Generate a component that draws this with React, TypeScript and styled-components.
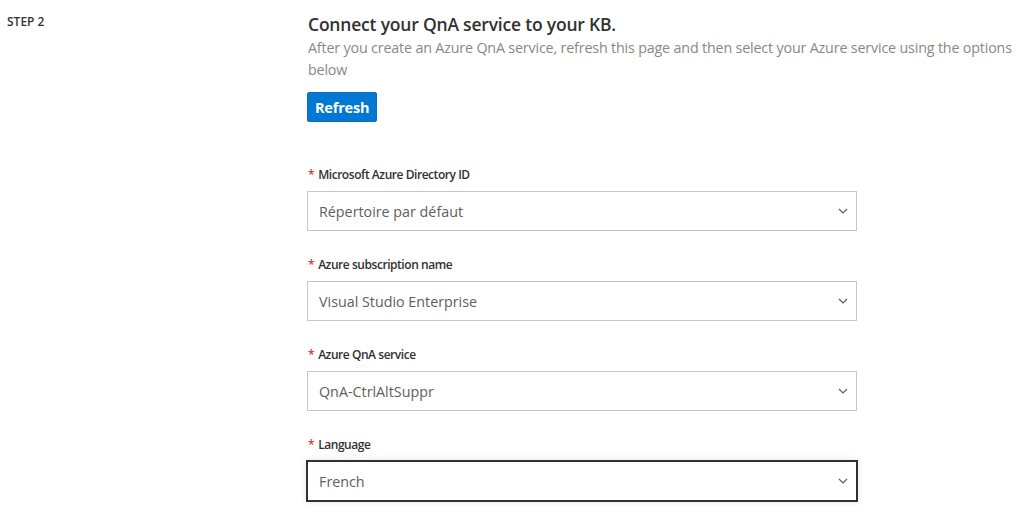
import React from "react";
import styled, { createGlobalStyle } from "styled-components";

const Global = createGlobalStyle`
  html, body { margin: 0; padding: 0; background: #fff; }
  body { font-family: "Segoe UI", "Open Sans", "Noto Sans", sans-serif; }
  * { box-sizing: border-box; }
`;

const Page = styled.div`
  display: grid;
  grid-template-columns: 300px 712px;
  padding: 11px 0 0 7px;
  width: 1024px;
  height: 523px;
  overflow: hidden;
`;

const StepLabel = styled.div`
  font-size: 12px;
  font-weight: 600;
  color: #333;
  line-height: 16px;
  padding-top: 3px;
`;

const Content = styled.div`
  display: flex;
  flex-direction: column;
`;

const Title = styled.h2`
  margin: 0 0 0 1px;
  font-size: 17.5px;
  font-weight: 600;
  color: #323130;
  line-height: 26px;
  letter-spacing: -0.2px;
`;

const Description = styled.p`
  margin: 0 0 0 1px;
  font-size: 14.3px;
  line-height: 22px;
  color: #8a8886;
  width: 711px;
  letter-spacing: -0.17px;
`;

const RefreshButton = styled.button`
  align-self: flex-start;
  margin-top: 11px;
  height: 30px;
  padding: 0 7px;
  background: #0078d4;
  border: 1px solid #106ebe;
  border-radius: 2px;
  color: #fff;
  font-family: inherit;
  font-size: 14.5px;
  font-weight: 700;
  letter-spacing: -0.2px;
  cursor: pointer;
`;

const Form = styled.div`
  display: flex;
  flex-direction: column;
  gap: 25px;
  margin-top: 44px;
`;

const Field = styled.div`
  display: flex;
  flex-direction: column;
  gap: 7px;
  width: 550px;
`;

const Label = styled.label`
  font-size: 12px;
  font-weight: 600;
  color: #323130;
  line-height: 18px;
  padding-left: 1px;
  letter-spacing: -0.45px;
`;

const Required = styled.span`
  color: #d13438;
  margin-right: 4px;
`;

const SelectBox = styled.div<{ $focused?: boolean }>`
  display: flex;
  align-items: center;
  justify-content: space-between;
  height: 40px;
  padding: 0 8px 0 11px;
  border: 1px solid ${(p) => (p.$focused ? "#323130" : "#c8c6c4")};
  box-shadow: ${(p) =>
    p.$focused ? "0 0 0 1px #323130, 0 0 6px 2px rgba(0,120,212,0.12)" : "none"};
  background: #fff;
  font-size: 14.3px;
  color: #605e5c;
`;

const Chevron = () => (
  <svg width="10" height="6" viewBox="0 0 10 6" fill="none">
    <path d="M1 1l4 4 4-4" stroke="#605e5c" strokeWidth="1.2" />
  </svg>
);

const fields = [
  { label: "Microsoft Azure Directory ID", value: "Répertoire par défaut" },
  { label: "Azure subscription name", value: "Visual Studio Enterprise" },
  { label: "Azure QnA service", value: "QnA-CtrlAltSuppr" },
  { label: "Language", value: "French", focused: true },
];

export default function App() {
  return (
    <>
      <Global />
      <Page>
        <StepLabel>STEP 2</StepLabel>
        <Content>
          <Title>Connect your QnA service to your KB.</Title>
          <Description>
            After you create an Azure QnA service, refresh this page and then select your Azure
            service using the options below
          </Description>
          <RefreshButton>Refresh</RefreshButton>
          <Form>
            {fields.map((f) => (
              <Field key={f.label}>
                <Label>
                  <Required>*</Required>
                  {f.label}
                </Label>
                <SelectBox $focused={f.focused}>
                  <span>{f.value}</span>
                  <Chevron />
                </SelectBox>
              </Field>
            ))}
          </Form>
        </Content>
      </Page>
    </>
  );
}
